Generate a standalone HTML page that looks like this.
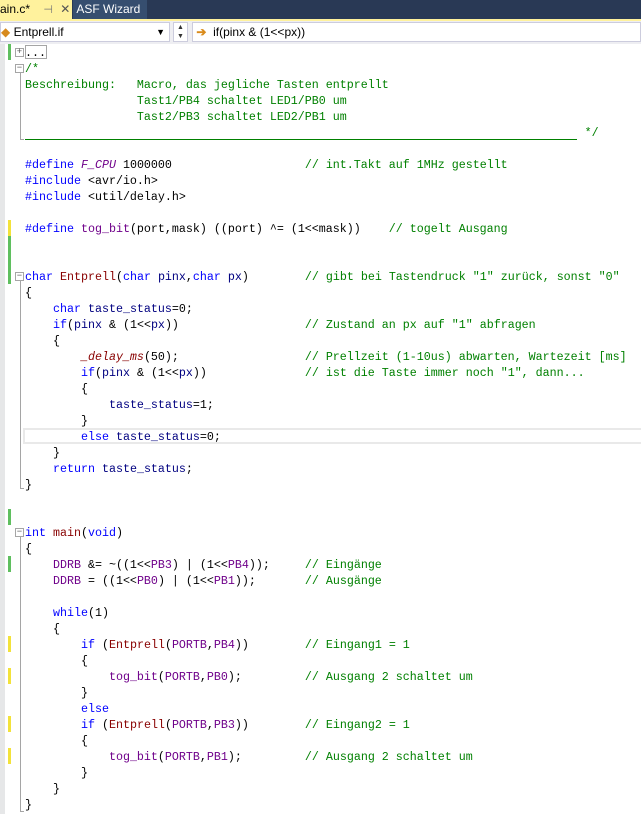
<!DOCTYPE html>
<html><head><meta charset="utf-8"><style>
body{margin:0;width:641px;height:814px;overflow:hidden;background:#fff;position:relative;font-family:"Liberation Sans",sans-serif}
.tabs{position:absolute;left:0;top:0;width:641px;height:19px;background:#293955}
.t1{position:absolute;left:0;top:0;width:72px;height:19px;background:#fff29d;font-size:12px;color:#000;line-height:19px}
.t2{position:absolute;left:73px;top:0;width:74px;height:19px;background:#364e6f;color:#fff;font-size:12px;line-height:19px}
.ybar{position:absolute;left:0;top:19px;width:641px;height:2px;background:#fff29d}
.nav{position:absolute;left:0;top:21px;width:641px;height:23px;background:#eeeef2}
.c1{position:absolute;left:0;top:1px;width:170px;height:20px;background:#fff;border:1px solid #ccd;box-sizing:border-box;font-size:12px;line-height:18px}
.c2{position:absolute;left:192px;top:1px;width:449px;height:20px;background:#fff;border:1px solid #ccd;box-sizing:border-box;font-size:12px;line-height:18px}
.sp{position:absolute;left:173px;top:1px;width:15px;height:20px;background:#fff;border:1px solid #ccd;box-sizing:border-box;font-size:7px;line-height:9px;text-align:center;color:#333}
.gut{position:absolute;left:0;top:44px;width:5px;height:770px;background:#e6e7e8}
.m{position:absolute;left:8px;width:3px}
.g{background:#5fbf5f}.y{background:#f3e23a}
pre{position:absolute;left:25px;top:45px;margin:0;font-family:"Liberation Mono",monospace;font-size:11.67px;line-height:16px;color:#000}
.k{color:#0000ff}.c{color:#008000}.f{color:#880000}.v{color:#000080}.p{color:#6f008a}.i{font-style:italic}
.fl{position:absolute;left:20px;width:1px;background:#a5a5a5}
.bx{position:absolute;left:15px;width:9px;height:9px;border:1px solid #a5a5a5;box-sizing:border-box;background:#fff;font-size:9px;line-height:7px;text-align:center;color:#555;font-family:"Liberation Mono",monospace}
.tick{position:absolute;left:20px;width:4px;height:1px;background:#a5a5a5}
</style></head><body>
<div class="tabs"><div class="t1">ain.c* <span style="color:#777;margin-left:10px;font-size:11px">⊣</span> <span style="color:#555;margin-left:4px">✕</span></div><div class="t2">&nbsp;ASF Wizard</div></div>
<div class="ybar"></div>
<div class="nav">
<div class="c1"><span style="color:#d78a1e">◆</span> Entprell.if<span style="position:absolute;right:4px;top:0;font-size:9px">▼</span></div>
<div class="sp">▲<br>▼</div>
<div class="c2">&nbsp;<span style="color:#d98a1a;font-weight:bold">➔</span>&nbsp; if(pinx &amp; (1&lt;&lt;px))</div>
</div>
<div class="gut"></div>
<div class="m g" style="top:44px;height:16px"></div>
<div class="m y" style="top:220px;height:16px"></div>
<div class="m g" style="top:236px;height:48px"></div>
<div class="m g" style="top:509px;height:16px"></div>
<div class="m g" style="top:556px;height:16px"></div>
<div class="m y" style="top:636px;height:16px"></div>
<div class="m y" style="top:668px;height:16px"></div>
<div class="m y" style="top:716px;height:16px"></div>
<div class="m y" style="top:748px;height:16px"></div>
<div class="fl" style="top:73px;height:67px"></div><div class="tick" style="top:139px"></div>
<div class="fl" style="top:281px;height:207px"></div><div class="tick" style="top:488px"></div>
<div class="fl" style="top:537px;height:275px"></div><div class="tick" style="top:811px"></div>
<div class="bx" style="top:48px">+</div>
<div style="position:absolute;left:25px;top:45px;width:22px;height:14px;border:1px solid #a5a5a5;box-sizing:border-box"></div>
<div class="bx" style="top:64px">−</div>
<div class="bx" style="top:272px">−</div>
<div class="bx" style="top:528px">−</div>
<div style="position:absolute;left:25px;top:139px;width:552px;height:1px;background:#008000"></div>
<div style="position:absolute;left:23px;top:428px;width:618px;height:16px;border:2px solid #e9e9e9;border-right:none;box-sizing:border-box"></div>
<pre>...
<span class="c">/*
Beschreibung:   Macro, das jegliche Tasten entprellt
                Tast1/PB4 schaltet LED1/PB0 um
                Tast2/PB3 schaltet LED2/PB1 um
                                                                                */</span>

<span class="k">#define</span> <span class="p i">F_CPU</span> 1000000                   <span class="c">// int.Takt auf 1MHz gestellt</span>
<span class="k">#include</span> &lt;avr/io.h&gt;
<span class="k">#include</span> &lt;util/delay.h&gt;

<span class="k">#define</span> <span class="p">tog_bit</span>(port,mask) ((port) ^= (1&lt;&lt;mask))    <span class="c">// togelt Ausgang</span>


<span class="k">char</span> <span class="f">Entprell</span>(<span class="k">char</span> <span class="v">pinx</span>,<span class="k">char</span> <span class="v">px</span>)        <span class="c">// gibt bei Tastendruck "1" zurück, sonst "0"</span>
{
    <span class="k">char</span> <span class="v">taste_status</span>=0;
    <span class="k">if</span>(<span class="v">pinx</span> &amp; (1&lt;&lt;<span class="v">px</span>))                  <span class="c">// Zustand an px auf "1" abfragen</span>
    {
        <span class="f i">_delay_ms</span>(50);                  <span class="c">// Prellzeit (1-10us) abwarten, Wartezeit [ms]</span>
        <span class="k">if</span>(<span class="v">pinx</span> &amp; (1&lt;&lt;<span class="v">px</span>))              <span class="c">// ist die Taste immer noch "1", dann...</span>
        {
            <span class="v">taste_status</span>=1;
        }
        <span class="k">else</span> <span class="v">taste_status</span>=0;
    }
    <span class="k">return</span> <span class="v">taste_status</span>;
}


<span class="k">int</span> <span class="f">main</span>(<span class="k">void</span>)
{
    <span class="p">DDRB</span> &amp;= ~((1&lt;&lt;<span class="p">PB3</span>) | (1&lt;&lt;<span class="p">PB4</span>));     <span class="c">// Eingänge</span>
    <span class="p">DDRB</span> = ((1&lt;&lt;<span class="p">PB0</span>) | (1&lt;&lt;<span class="p">PB1</span>));       <span class="c">// Ausgänge</span>

    <span class="k">while</span>(1)
    {
        <span class="k">if</span> (<span class="f">Entprell</span>(<span class="p">PORTB</span>,<span class="p">PB4</span>))        <span class="c">// Eingang1 = 1</span>
        {
            <span class="p">tog_bit</span>(<span class="p">PORTB</span>,<span class="p">PB0</span>);         <span class="c">// Ausgang 2 schaltet um</span>
        }
        <span class="k">else</span>
        <span class="k">if</span> (<span class="f">Entprell</span>(<span class="p">PORTB</span>,<span class="p">PB3</span>))        <span class="c">// Eingang2 = 1</span>
        {
            <span class="p">tog_bit</span>(<span class="p">PORTB</span>,<span class="p">PB1</span>);         <span class="c">// Ausgang 2 schaltet um</span>
        }
    }
}</pre>
</body></html>
